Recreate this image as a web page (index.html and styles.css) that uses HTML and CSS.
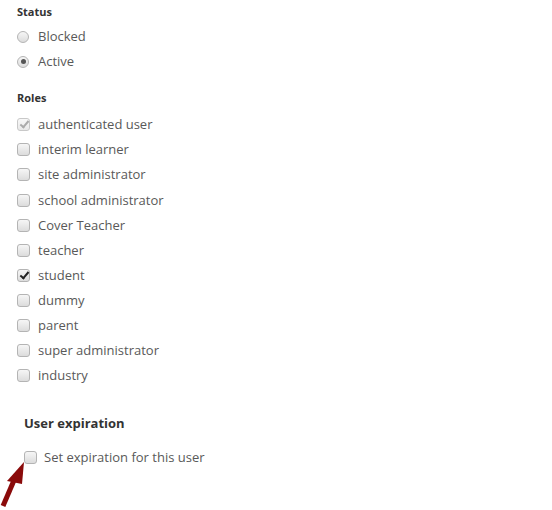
FILE: index.html
```html
<!DOCTYPE html>
<html>
<head>
<meta charset="utf-8">
<link rel="stylesheet" href="styles.css">
</head>
<body>
<div class="form">
  <div class="group">
    <div class="heading">Status</div>
    <label class="opt"><span class="radio"></span>Blocked</label>
    <label class="opt"><span class="radio checked"></span>Active</label>
  </div>
  <div class="group roles">
    <div class="heading">Roles</div>
    <label class="opt"><span class="box disabled checked"></span>authenticated user</label>
    <label class="opt"><span class="box"></span>interim learner</label>
    <label class="opt"><span class="box"></span>site administrator</label>
    <label class="opt"><span class="box"></span>school administrator</label>
    <label class="opt"><span class="box"></span>Cover Teacher</label>
    <label class="opt"><span class="box"></span>teacher</label>
    <label class="opt"><span class="box checked"></span>student</label>
    <label class="opt"><span class="box"></span>dummy</label>
    <label class="opt"><span class="box"></span>parent</label>
    <label class="opt"><span class="box"></span>super administrator</label>
    <label class="opt"><span class="box"></span>industry</label>
  </div>
  <div class="expiration">
    <div class="exp-heading">User expiration</div>
    <label class="opt exp-opt"><span class="box"></span>Set expiration for this user</label>
  </div>
</div>
<svg class="arrow" width="30" height="50" viewBox="0 460 30 50">
  <line x1="3" y1="506" x2="15" y2="478" stroke="#8a0a0a" stroke-width="5"/>
  <polygon points="24,462 7,481 22,484" fill="#8a0a0a"/>
</svg>
</body>
</html>
```
FILE: styles.css
```css
html, body {
  margin: 0;
  padding: 0;
  background: #fff;
}
body {
  font-family: "Open Sans", "Liberation Sans", sans-serif;
  color: #595959;
  position: relative;
  width: 552px;
  height: 510px;
  overflow: hidden;
}
.form {
  padding-left: 17px;
  padding-top: 4px;
}
.heading {
  font-size: 11px;
  font-weight: bold;
  color: #333;
  line-height: 16px;
  margin-bottom: 4px;
}
.roles {
  margin-top: 16px;
}
.roles .heading {
  margin-bottom: 6px;
}
.opt {
  display: flex;
  align-items: center;
  height: 25.1px;
  font-size: 13px;
  line-height: 25px;
}
.radio, .box {
  display: inline-block;
  box-sizing: border-box;
  flex: none;
  background: linear-gradient(#f6f6f6, #dcdcdc);
  border: 1px solid #b4b4b4;
  position: relative;
}
.radio {
  width: 12px;
  height: 12px;
  border-radius: 50%;
  margin-right: 9px;
}
.radio.checked::after {
  content: "";
  position: absolute;
  left: 2.5px;
  top: 2.5px;
  width: 5px;
  height: 5px;
  border-radius: 50%;
  background: #555;
}
.box {
  width: 13px;
  height: 13px;
  border-radius: 3px;
  margin-right: 8px;
}
.box.checked::after {
  content: "";
  position: absolute;
  left: 4px;
  top: 0px;
  width: 3px;
  height: 7px;
  border: solid #222;
  border-width: 0 2.5px 2.5px 0;
  transform: rotate(40deg);
}
.box.disabled {
  border-color: #c8c8c8;
  background: linear-gradient(#f8f8f8, #e8e8e8);
}
.box.disabled.checked::after {
  border-color: #aaa;
}
.expiration {
  padding-left: 7px;
  margin-top: 26px;
}
.exp-heading {
  font-size: 13px;
  font-weight: bold;
  color: #333;
  line-height: 18px;
  margin-bottom: 13px;
}
.exp-opt .box {
  margin-right: 7px;
}
.arrow {
  position: absolute;
  left: 0;
  top: 460px;
}
```
